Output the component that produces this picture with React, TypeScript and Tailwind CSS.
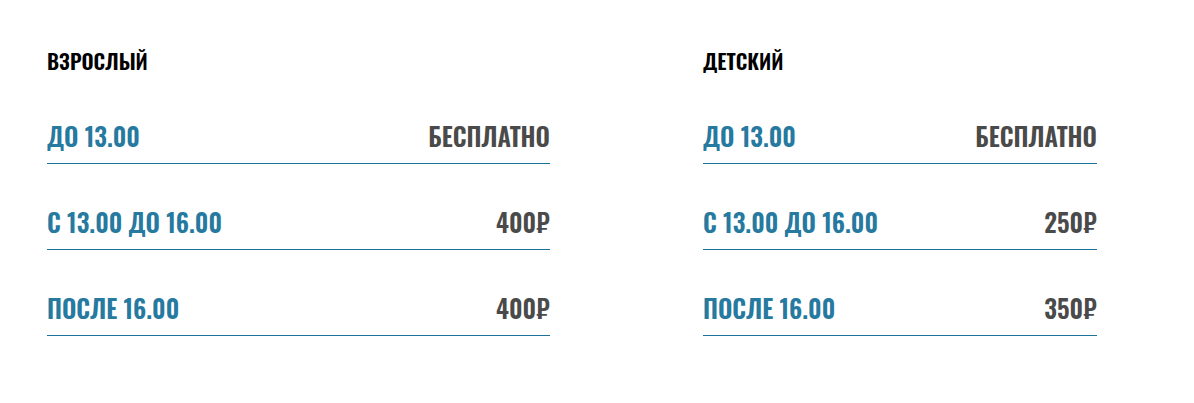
const adult = [
  { time: "ДО 13.00", price: "БЕСПЛАТНО" },
  { time: "С 13.00 ДО 16.00", price: "400₽" },
  { time: "ПОСЛЕ 16.00", price: "400₽" },
];

const kids = [
  { time: "ДО 13.00", price: "БЕСПЛАТНО" },
  { time: "С 13.00 ДО 16.00", price: "250₽" },
  { time: "ПОСЛЕ 16.00", price: "350₽" },
];

type Row = { time: string; price: string };

function PriceTable({ title, rows, width }: { title: string; rows: Row[]; width: string }) {
  return (
    <div className={width}>
      <h3 className="font-['Oswald',sans-serif] font-semibold text-[21px] leading-none text-black h-[28px]">
        {title}
      </h3>
      {rows.map((r) => (
        <div key={r.time}>
          <div className="flex justify-between items-end h-[85px] pb-[15px]">
            <span className="font-['Oswald',sans-serif] font-semibold text-[25px] leading-none text-[#26799f]">
              {r.time}
            </span>
            <span className="font-['Oswald',sans-serif] font-semibold text-[25px] leading-none text-[#4a4a4a]">
              {r.price}
            </span>
          </div>
          <div className="h-px bg-[#1e7299]" />
        </div>
      ))}
    </div>
  );
}

export default function App() {
  return (
    <div className="w-[1194px] h-[403px] bg-white pt-[50px] pl-[47px] flex gap-[153px]">
      <PriceTable title="ВЗРОСЛЫЙ" rows={adult} width="w-[503px]" />
      <PriceTable title="ДЕТСКИЙ" rows={kids} width="w-[394px]" />
    </div>
  );
}
